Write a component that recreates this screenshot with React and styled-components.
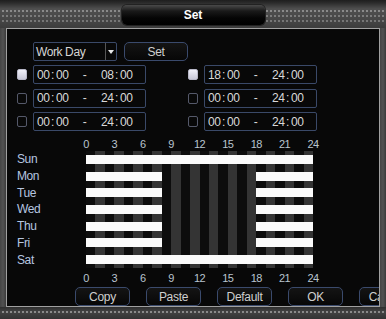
import React from 'react';
import styled, { createGlobalStyle } from 'styled-components';

const Global = createGlobalStyle`
  html, body { margin: 0; padding: 0; background: #3a3a3a; }
  body { font-family: "Liberation Sans", Arial, sans-serif; }
`;

const Window = styled.div`
  width: 386px;
  height: 319px;
  display: flex;
  flex-direction: column;
  background: #3b3b3b;
  overflow: hidden;
`;

const TitleBar = styled.div`
  height: 28px;
  box-sizing: border-box;
  padding-top: 5px;
  display: flex;
  justify-content: center;
  background:
    radial-gradient(circle at 2px 2px, #8a8a8a 0 0.9px, transparent 1.5px) 1px 9px / 4px 4px repeat-x,
    radial-gradient(circle at 2px 2px, #7c7c7c 0 0.9px, transparent 1.5px) 1px 14px / 4px 4px repeat-x,
    radial-gradient(circle at 2px 2px, #767676 0 0.9px, transparent 1.5px) 1px 19px / 4px 4px repeat-x,
    linear-gradient(#1e1e1e 0, #2c2c2c 3px, #505050 9px, #464646 20px, #3c3c3c 28px);
`;

const Tab = styled.div`
  width: 143px;
  height: 20px;
  border-radius: 5px;
  background: linear-gradient(#4a4a4a 0, #1a1a1a 30%, #050505 65%, #000 100%);
  box-shadow: 0 0 0 1px #222;
  color: #ffffff;
  font-weight: bold;
  font-size: 12px;
  display: flex;
  align-items: center;
  justify-content: center;
`;

const Middle = styled.div`
  height: 279px;
  display: flex;
`;

const Side = styled.div`
  width: ${p => p.$w}px;
  flex: none;
  background: linear-gradient(90deg, #444, #525252 50%, #3a3a3a);
`;

const Panel = styled.div`
  width: 374px;
  flex: none;
  box-sizing: border-box;
  border: 1px solid #a0a0a0;
  background: #080808;
  padding: 13px 0 0 10px;
  overflow: hidden;
  display: flex;
  flex-direction: column;
`;

const BottomBar = styled.div`
  height: 12px;
  background:
    radial-gradient(circle at 2px 2px, #8a8a8a 0 0.9px, transparent 1.5px) 1px 3px / 4px 4px repeat-x,
    linear-gradient(#2e2e2e, #444 40%, #333);
`;

const TopRow = styled.div`
  display: flex;
  gap: 7px;
  height: 19px;
  margin-left: 16px;
`;

const Select = styled.div`
  width: 84px;
  box-sizing: border-box;
  border: 1px solid #3a4968;
  border-radius: 2px;
  display: flex;
  align-items: center;
  color: #d6d6d6;
  font-size: 12px;
  letter-spacing: -0.4px;
`;

const SelectText = styled.span`
  flex: 1;
  padding-left: 2px;
`;

const Arrow = styled.span`
  width: 10px;
  height: 100%;
  border-left: 1px solid #555;
  display: flex;
  align-items: center;
  justify-content: center;
  &::after {
    content: "";
    border-left: 3px solid transparent;
    border-right: 3px solid transparent;
    border-top: 4px solid #e8e8e8;
  }
`;

const Button = styled.div`
  width: ${p => p.$w}px;
  flex: none;
  height: 19px;
  box-sizing: border-box;
  border: 1px solid #3a4a6c;
  border-radius: 5px;
  background: linear-gradient(#141414, #070707);
  color: #cfcfcf;
  font-size: 12px;
  letter-spacing: -0.3px;
  display: flex;
  align-items: center;
  justify-content: center;
  white-space: nowrap;
`;

const TimeGrid = styled.div`
  margin-top: 4px;
  display: grid;
  grid-template-columns: 129px 129px;
  column-gap: 42px;
  row-gap: 4.5px;
`;

const Entry = styled.div`
  display: flex;
  align-items: center;
  gap: 6px;
  height: 19px;
`;

const Check = styled.span`
  width: 10px;
  height: 11px;
  box-sizing: border-box;
  border-radius: 2px;
  border: 1px solid ${p => (p.$on ? '#b8b8c8' : '#55596a')};
  background: ${p => (p.$on ? 'linear-gradient(#f0f0f8, #c8c8d8)' : 'transparent')};
  flex: none;
`;

const TimeBox = styled.div`
  width: 113px;
  height: 19px;
  box-sizing: border-box;
  border: 1px solid #3a4968;
  border-radius: 2px;
  padding-left: 3px;
  display: flex;
  align-items: center;
  color: #d8d8d8;
  font-size: 12px;
  letter-spacing: -0.5px;
`;

const Num = styled.span`
  width: 12px;
  text-align: left;
`;

const Sep = styled.span`
  width: ${p => p.$w}px;
  text-align: center;
`;

const Scale = styled.div`
  margin-left: 59px;
  width: 247px;
  height: 12px;
  margin-top: ${p => p.$mt}px;
  display: flex;
  justify-content: space-between;
`;

const Tick = styled.span`
  width: 20px;
  text-align: center;
  font-size: 11px;
  line-height: 12px;
  color: #b9c4cf;
  letter-spacing: -0.6px;
`;

const Schedule = styled.div`
  margin-top: 1px;
  display: grid;
  grid-template-columns: 69px 227px;
  height: 117px;
`;

const DayCol = styled.div`
  display: grid;
  grid-template-rows: repeat(7, 1fr);
`;

const DayLabel = styled.span`
  display: flex;
  align-items: center;
  font-size: 12px;
  color: #b6c6e0;
  letter-spacing: -0.4px;
`;

const Chart = styled.div`
  display: grid;
  grid-template-rows: repeat(7, 1fr);
  background: repeating-linear-gradient(90deg, #0d0d0d 0 9.4583px, #343434 9.4583px 18.9167px);
`;

const ChartRow = styled.div`
  display: flex;
  align-items: center;
`;

const Seg = styled.div`
  height: 9px;
  flex: none;
  background: ${p => (p.$on ? '#fbfbfb' : 'transparent')};
`;

const ButtonRow = styled.div`
  margin-top: 3px;
  margin-left: 58px;
  display: flex;
  gap: 16px;
`;

const days = [
  { name: 'Sun', spans: [[0, 24]] },
  { name: 'Mon', spans: [[0, 8], [18, 24]] },
  { name: 'Tue', spans: [[0, 8], [18, 24]] },
  { name: 'Wed', spans: [[0, 8], [18, 24]] },
  { name: 'Thu', spans: [[0, 8], [18, 24]] },
  { name: 'Fri', spans: [[0, 8], [18, 24]] },
  { name: 'Sat', spans: [[0, 24]] },
];

const times = [
  { on: true, a: ['00', '00'], b: ['08', '00'] },
  { on: true, a: ['18', '00'], b: ['24', '00'] },
  { on: false, a: ['00', '00'], b: ['24', '00'] },
  { on: false, a: ['00', '00'], b: ['24', '00'] },
  { on: false, a: ['00', '00'], b: ['24', '00'] },
  { on: false, a: ['00', '00'], b: ['24', '00'] },
];

const ticks = [0, 3, 6, 9, 12, 15, 18, 21, 24];

function segments(spans) {
  const out = [];
  let cur = 0;
  spans.forEach(([s, e]) => {
    if (s > cur) out.push({ on: false, len: s - cur });
    out.push({ on: true, len: e - s });
    cur = e;
  });
  if (cur < 24) out.push({ on: false, len: 24 - cur });
  return out;
}

function HourScale({ mt }) {
  return (
    <Scale $mt={mt}>
      {ticks.map(t => (
        <Tick key={t}>{t}</Tick>
      ))}
    </Scale>
  );
}

export default function App() {
  return (
    <>
      <Global />
      <Window>
        <TitleBar>
          <Tab>Set</Tab>
        </TitleBar>
        <Middle>
          <Side $w={6} />
          <Panel>
            <TopRow>
              <Select>
                <SelectText>Work Day</SelectText>
                <Arrow />
              </Select>
              <Button $w={64}>Set</Button>
            </TopRow>
            <TimeGrid>
              {times.map((t, i) => (
                <Entry key={i}>
                  <Check $on={t.on} />
                  <TimeBox>
                    <Num>{t.a[0]}</Num>
                    <Sep $w={7}>:</Sep>
                    <Num>{t.a[1]}</Num>
                    <Sep $w={33}>-</Sep>
                    <Num>{t.b[0]}</Num>
                    <Sep $w={7}>:</Sep>
                    <Num>{t.b[1]}</Num>
                  </TimeBox>
                </Entry>
              ))}
            </TimeGrid>
            <HourScale mt={7} />
            <Schedule>
              <DayCol>
                {days.map(d => (
                  <DayLabel key={d.name}>{d.name}</DayLabel>
                ))}
              </DayCol>
              <Chart>
                {days.map(d => (
                  <ChartRow key={d.name}>
                    {segments(d.spans).map((s, i) => (
                      <Seg key={i} $on={s.on} style={{ width: `${(s.len / 24) * 100}%` }} />
                    ))}
                  </ChartRow>
                ))}
              </Chart>
            </Schedule>
            <HourScale mt={4} />
            <ButtonRow>
              <Button $w={55}>Copy</Button>
              <Button $w={55}>Paste</Button>
              <Button $w={55}>Default</Button>
              <Button $w={55}>OK</Button>
              <Button $w={55}>Cancel</Button>
            </ButtonRow>
          </Panel>
          <Side $w={6} />
        </Middle>
        <BottomBar />
      </Window>
    </>
  );
}
